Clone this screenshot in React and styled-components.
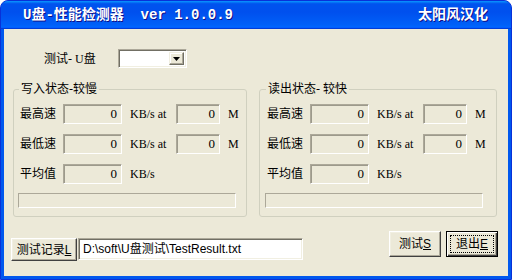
import React from 'react';
import styled, { createGlobalStyle } from 'styled-components';

const Global = createGlobalStyle`
  html, body { margin: 0; padding: 0; background: #ffffff; }
  body { font-family: "Noto Sans CJK SC", sans-serif; }
  * { box-sizing: border-box; }
`;

const Window = styled.div`
  width: 512px;
  height: 280px;
  display: flex;
  flex-direction: column;
  background: #0058ee;
  border: 1px solid #0831d9;
  border-radius: 8px 8px 0 0;
  overflow: hidden;
`;

const TitleBar = styled.div`
  flex: none;
  height: 28px;
  display: flex;
  align-items: center;
  justify-content: space-between;
  padding: 0 23px 0 22px;
  background: linear-gradient(180deg, #0997ff, #0053ee 10%, #0050ee 40%, #0060f8 85%, #0066ff 93%, #005bff 95%, #003dd7 97%, #003dd7);
  color: #ffffff;
  font-weight: bold;
  font-size: 14px;
  line-height: 16px;
  font-family: "Liberation Mono", "Noto Sans CJK SC", monospace;
  text-shadow: 1px 1px 0 #0f1089;
  white-space: pre;
`;

const Body = styled.div`
  flex: 1;
  margin: 0 3px 3px;
  background: #ece9d8;
  display: flex;
  flex-direction: column;
  padding: 20px 11px 0 9px;
  font-size: 12px;
  color: #000;
`;

const TopRow = styled.div`
  display: flex;
  align-items: center;
  height: 19px;
  padding-left: 31px;
`;

const Label = styled.span`
  font-family: "Liberation Serif", "Noto Sans CJK SC", serif;
  font-size: 12px;
  line-height: 14px;
  white-space: pre;
  width: ${p => (p.$w ? `${p.$w}px` : 'auto')};
`;

const Combo = styled.div`
  width: 69px;
  height: 19px;
  background: #fff;
  border: 1px solid;
  border-color: #aca899 #fff #fff #aca899;
  box-shadow: inset 1px 1px #716f64, inset -1px -1px #f1efe2;
  display: flex;
  justify-content: flex-end;
  padding: 2px;
`;

const DropButton = styled.div`
  width: 15px;
  height: 100%;
  background: #ece9d8;
  border: 1px solid;
  border-color: #f1efe2 #716f64 #716f64 #f1efe2;
  box-shadow: inset -1px -1px #aca899, inset 1px 1px #fff;
  display: flex;
  align-items: center;
  justify-content: center;
`;

const GroupsRow = styled.div`
  display: flex;
  gap: 12px;
  margin-top: 14px;
`;

const Group = styled.fieldset`
  margin: 0;
  width: ${p => p.$w}px;
  min-width: 0;
  padding: 8px 0 8px ${p => p.$pl}px;
  border: 1px solid #d0d0bf;
  border-radius: 3px;
  display: flex;
  flex-direction: column;
  gap: 10px;
`;

const Legend = styled.legend`
  margin-left: -1px;
  padding: 0 2px;
  font-family: "Liberation Serif", "Noto Sans CJK SC", serif;
  font-size: 12px;
  line-height: 14px;
  white-space: pre;
`;

const StatRow = styled.div`
  display: grid;
  grid-template-columns: 43px 59px 54px 44px auto;
  align-items: center;
  height: 20px;
`;

const Unit = styled.span`
  font-family: "Liberation Serif", serif;
  font-size: 12px;
  line-height: 14px;
  padding-left: 8px;
  white-space: pre;
`;

const ValueBox = styled.div`
  height: 20px;
  border: 1px solid;
  border-color: #aca899 #fff #fff #aca899;
  box-shadow: inset 1px 1px #9d9a8c;
  background: #ece9d8;
  font-family: "Liberation Serif", serif;
  font-size: 13px;
  line-height: 15px;
  text-align: right;
  padding: 1px 4px 0 0;
`;

const Progress = styled.div`
  height: 15px;
  width: 218px;
  margin-left: -2px;
  margin-top: -1px;
  border: 1px solid;
  border-color: #aca899 #fff #fff #aca899;
  background: #ece9d8;
`;

const BottomRow = styled.div`
  display: flex;
  align-items: flex-start;
  margin: 14px -1px 0 -2px;
`;

const PathCluster = styled.div`
  display: flex;
  margin-top: 7px;
  flex: 1;
`;

const Button = styled.button`
  width: ${p => p.$w}px;
  height: ${p => p.$h}px;
  margin: 0;
  background: #ece9d8;
  color: #000;
  border: 1px solid;
  border-color: ${p => (p.$default ? '#000' : '#fff #404040 #404040 #fff')};
  box-shadow: ${p =>
    p.$default
      ? 'inset 1px 1px #fff, inset -1px -1px #404040, inset -2px -2px #aca899'
      : 'inset -1px -1px #aca899, inset 1px 1px #f1efe2'};
  font-family: "Liberation Sans", "Noto Sans CJK SC", sans-serif;
  font-size: 12px;
  line-height: 14px;
  padding: ${p => (p.$default ? '3px' : '0')};
  display: flex;
  align-items: center;
  justify-content: center;
`;

const FocusRect = styled.span`
  flex: 1;
  align-self: stretch;
  display: flex;
  align-items: center;
  justify-content: center;
  border: 1px dotted #000;
`;

const Key = styled.span`
  text-decoration: underline;
`;

const PathField = styled.div`
  width: 225px;
  height: 22px;
  margin-left: 1px;
  background: #fff;
  border: 1px solid;
  border-color: #aca899 #fff #fff #aca899;
  box-shadow: inset 1px 1px #716f64, inset -1px -1px #f1efe2;
  font-family: "Liberation Sans", "Noto Sans CJK SC", sans-serif;
  font-size: 12px;
  line-height: 14px;
  padding: 3px 0 0 4px;
  white-space: pre;
`;

const Actions = styled.div`
  display: flex;
  gap: 5px;
`;

function StatGroup({ title, width, pl }) {
  const rows = [
    { name: '最高速', full: true },
    { name: '最低速', full: true },
    { name: '平均值', full: false },
  ];
  return (
    <Group $w={width} $pl={pl}>
      <Legend>{title}</Legend>
      {rows.map(r => (
        <StatRow key={r.name}>
          <Label>{r.name}</Label>
          <ValueBox>0</ValueBox>
          <Unit>{r.full ? 'KB/s at' : 'KB/s'}</Unit>
          {r.full && <ValueBox>0</ValueBox>}
          {r.full && <Unit>M</Unit>}
        </StatRow>
      ))}
      <Progress />
    </Group>
  );
}

export default function App() {
  return (
    <>
      <Global />
      <Window>
        <TitleBar>
          <span>U盘-性能检测器  ver 1.0.0.9</span>
          <span>太阳风汉化</span>
        </TitleBar>
        <Body>
          <TopRow>
            <Label $w={74}>测试- U盘</Label>
            <Combo>
              <DropButton>
                <svg width="7" height="4" viewBox="0 0 7 4">
                  <path d="M0 0H7L3.5 4Z" fill="#000" />
                </svg>
              </DropButton>
            </Combo>
          </TopRow>
          <GroupsRow>
            <StatGroup title="写入状态-较慢" width={234} pl={6} />
            <StatGroup title="读出状态- 较快" width={238} pl={7} />
          </GroupsRow>
          <BottomRow>
            <PathCluster>
              <Button $w={66} $h={23}>
                测试记录<Key>L</Key>
              </Button>
              <PathField>D:\soft\U盘测试\TestResult.txt</PathField>
            </PathCluster>
            <Actions>
              <Button $w={52} $h={26}>
                测试<Key>S</Key>
              </Button>
              <Button $w={52} $h={26} $default>
                <FocusRect>
                  退出<Key>E</Key>
                </FocusRect>
              </Button>
            </Actions>
          </BottomRow>
        </Body>
      </Window>
    </>
  );
}
